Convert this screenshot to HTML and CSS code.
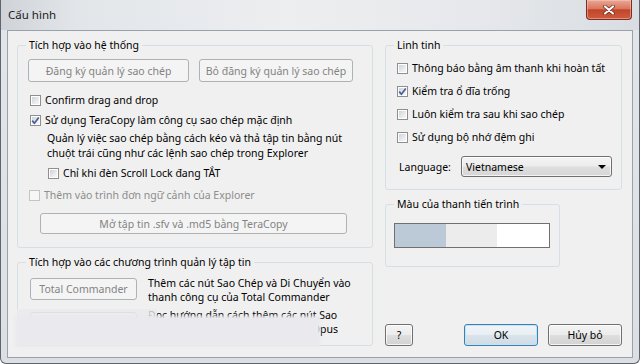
FILE: index.html
```html
<!DOCTYPE html>
<html lang="vi">
<head>
    <meta charset="UTF-8">
    <title>Cấu hình</title>
    <link rel="stylesheet" href="styles.css">
</head>
<body>
<div class="window">
    <div class="titlebar">
        <span class="title">Cấu hình</span>
        <span class="close">
            <svg width="12" height="10" viewBox="0 0 12 10">
                <path d="M2 1.5 L10 8.5 M10 1.5 L2 8.5" stroke="#6a2518" stroke-width="3.6" stroke-linecap="round" fill="none"/>
                <path d="M2 1.5 L10 8.5 M10 1.5 L2 8.5" stroke="#fff" stroke-width="2.2" stroke-linecap="round" fill="none"/>
            </svg>
        </span>
    </div>

    <div class="client">
        <!-- cột trái -->
        <div class="col-left">
            <div class="group sys">
                <div class="group-title">Tích hợp vào hệ thống</div>
                <div class="btn-row">
                    <button class="btn off reg">Đăng ký quản lý sao chép</button>
                    <button class="btn off unreg">Bỏ đăng ký quản lý sao chép</button>
                </div>
                <div class="check c-confirm"><span class="box"></span>Confirm drag and drop</div>
                <div class="check c-default"><span class="box"><svg width="9" height="9" viewBox="0 0 9 9"><path d="M1.2 4.6 L3.4 7.2 L7.8 1.4" stroke="#4a5c9a" stroke-width="1.7" fill="none"/></svg></span>Sử dụng TeraCopy làm công cụ sao chép mặc định</div>
                <div class="desc">Quản lý việc sao chép bằng cách kéo và thả tập tin bằng nút<br>chuột trái cũng như các lệnh sao chép trong Explorer</div>
                <div class="check c-scroll"><span class="box"></span>Chỉ khi đèn Scroll Lock đang TẮT</div>
                <div class="check c-menu off"><span class="box"></span>Thêm vào trình đơn ngữ cảnh của Explorer</div>
                <button class="btn off sfv">Mở tập tin .sfv và .md5 bằng TeraCopy</button>
            </div>

            <div class="group fm">
                <div class="group-title">Tích hợp vào các chương trình quản lý tập tin</div>
                <div class="fm-row r1">
                    <button class="btn off fm-btn">Total Commander</button>
                    <div class="fm-text">Thêm các nút Sao Chép và Di Chuyển vào<br>thanh công cụ của Total Commander</div>
                </div>
                <div class="fm-row r2">
                    <button class="btn off fm-btn">Directory Opus</button>
                    <div class="fm-text">Đọc hướng dẫn cách thêm các nút Sao<br>Chép và Di Chuyển vào Directory Opus</div>
                </div>
                <div class="smudge faint"></div>
                <div class="smudge"></div>
            </div>
        </div>

        <!-- cột phải -->
        <div class="col-right">
            <div class="group misc">
                <div class="group-title">Linh tinh</div>
                <div class="check"><span class="box"></span>Thông báo bằng âm thanh khi hoàn tất</div>
                <div class="check"><span class="box"><svg width="9" height="9" viewBox="0 0 9 9"><path d="M1.2 4.6 L3.4 7.2 L7.8 1.4" stroke="#4a5c9a" stroke-width="1.7" fill="none"/></svg></span>Kiểm tra ổ đĩa trống</div>
                <div class="check"><span class="box"></span>Luôn kiểm tra sau khi sao chép</div>
                <div class="check"><span class="box"></span>Sử dụng bộ nhớ đệm ghi</div>
                <div class="lang">
                    <span class="lang-label">Language:</span>
                    <div class="select"><span>Vietnamese</span><span class="arrow"></span></div>
                </div>
            </div>

            <div class="group color">
                <div class="group-title">Màu của thanh tiến trình</div>
                <div class="progress">
                    <span class="seg s1"></span><span class="seg s2"></span><span class="seg s3"></span>
                </div>
            </div>

            <div class="buttons">
                <button class="btn help">?</button>
                <button class="btn ok">OK</button>
                <button class="btn cancel">Hủy bỏ</button>
            </div>
        </div>
    </div>
</div>
</body>
</html>
```

FILE: styles.css
```css
* {box-sizing: border-box;}
body {margin:0; font-family: "Noto Sans", "Liberation Sans", sans-serif; font-size:10.5px; color:#000;}

.window {width:640px; height:364px; display:flex; flex-direction:column; background:linear-gradient(to bottom, #e2e5e9, #dce0e4); border:1px solid #5f656c; border-top:0; border-radius:0 0 6px 6px;}

.titlebar {height:30px; display:flex; align-items:flex-start; background:linear-gradient(90deg, #cfd3d8 0%, #e3e6e9 12%, #eceef0 45%, #e6e8eb 75%, #d9dde1 100%);}
.title {padding:7px 0 0 7px; font-size:11.5px; color:#1c1c1c;}
.close {margin-left:auto; margin-right:7px; width:46px; height:20px; display:flex; align-items:center; justify-content:center; border:1px solid #7a2f22; border-top:0; border-radius:0 0 4px 4px; background:linear-gradient(to bottom, #e9a898 0%, #d9785f 45%, #c2452b 52%, #cd5c3f 100%); box-shadow:inset 0 0 0 1px rgba(255,210,200,0.45);}

.client {margin:0 6px; height:328px; background:#f0f0f0; border:1px solid #97a2ad; display:grid; grid-template-columns:356px 237px; column-gap:12px; padding:14px 10px 12px 9px;}

.group {border:1px solid #d5dfe5; border-radius:3px; position:relative;}
.group-title {width:fit-content; margin:-8px 0 0 8px; padding:0 3px; line-height:14px; background:#f0f0f0;}

.btn {font:inherit; color:#000; padding:0; height:22px; border:1px solid #707070; border-radius:3px; background:linear-gradient(to bottom, #f4f4f4 0%, #ececec 48%, #dedede 52%, #d2d2d2 100%); box-shadow:inset 0 0 0 1px rgba(255,255,255,0.75);}
.btn.off {border-color:#adb2b5; background:#f4f4f4; color:#838383; box-shadow:none;}

.check {display:flex; align-items:center; height:20px;}
.check.off {color:#8d8d8d;}
.box {flex:none; width:11px; height:11px; margin-right:4px; border:1px solid #8e8f8f; background:linear-gradient(135deg, #c9cdd2 0%, #eeeeef 65%, #fbfbfb 100%); box-shadow:inset 0 0 0 1px #fff; display:flex; align-items:center; justify-content:center;}
.box svg {display:block;}
.check.off .box {border-color:#c4c4c4; background:#f6f6f6; box-shadow:none;}

/* nhóm hệ thống */
.sys {padding-bottom:13px;}
.btn-row {display:flex; gap:10px; margin:7px 0 0 10px;}
.btn-row .btn {height:23px;}
.reg {width:161px;}
.unreg {width:154px;}
.c-confirm {margin:8px 0 0 12px;}
.c-default {margin-left:12px;}
.desc {margin:1px 0 0 29px; line-height:15px;}
.c-scroll {margin:2px 0 0 30px;}
.c-menu {margin:2px 0 0 11px;}
.sfv {display:block; width:307px; height:21px; margin:8px 0 0 22px;}

/* nhóm quản lý tập tin */
.fm {margin-top:14px; padding-bottom:9px;}
.fm-row {display:flex; align-items:flex-start; margin-left:12px;}
.fm-row.r1 {margin-top:7px;}
.fm-row.r2 {margin-top:4px;}
.fm-btn {flex:none; width:107px; margin-right:11px;}
.r1 .fm-btn {margin-top:2px;}
.r2 .fm-btn {margin-top:4px;}
.fm-text {line-height:14px; white-space:nowrap;}
.smudge {position:absolute; left:-1px; top:55px; width:301px; height:27px; background:#eaeaee; box-shadow:0 0 3px 2px #eaeaee;}
.smudge.faint {top:46px; width:140px; height:9px; background:rgba(234,234,238,0.8); box-shadow:none;}

/* cột phải */
.col-right {display:flex; flex-direction:column;}
.misc {padding-bottom:12px;}
.misc .check {margin:3px 0 0 11px;}
.misc .group-title + .check {margin-top:6px;}
.lang {display:flex; align-items:center; margin:9px 0 0 13px; height:21px;}
.lang-label {width:62px;}
.select {width:151px; height:21px; display:flex; align-items:center; justify-content:space-between; padding:0 5px 0 4px; border:1px solid #707070; border-radius:3px; background:linear-gradient(to bottom, #f4f4f4 0%, #ececec 48%, #dedede 52%, #d6d6d6 100%); box-shadow:inset 0 0 0 1px rgba(255,255,255,0.7);}
.arrow {width:0; height:0; border-left:4px solid transparent; border-right:4px solid transparent; border-top:4px solid #000;}

.color {margin-top:14px; width:175px; padding-bottom:18px;}
.progress {display:flex; width:156px; height:25px; margin:12px 0 0 8px; border:1px solid #707070;}
.seg {height:100%;}
.s1 {width:51px; background:#bccad8;}
.s2 {width:51px; background:#ececec;}
.s3 {flex:1; background:#fff;}

.buttons {margin-top:auto; display:flex; gap:10px;}
.buttons .btn {height:22px;}
.help {width:28px;}
.ok {width:74px; margin-left:auto; border-color:#3c7fb1; box-shadow:inset 0 0 0 1px #c4e3f5; background:linear-gradient(to bottom, #f1f5f8 0%, #e8eef3 48%, #d9e3ea 52%, #cfdbe4 100%);}
.cancel {width:74px;}
```
